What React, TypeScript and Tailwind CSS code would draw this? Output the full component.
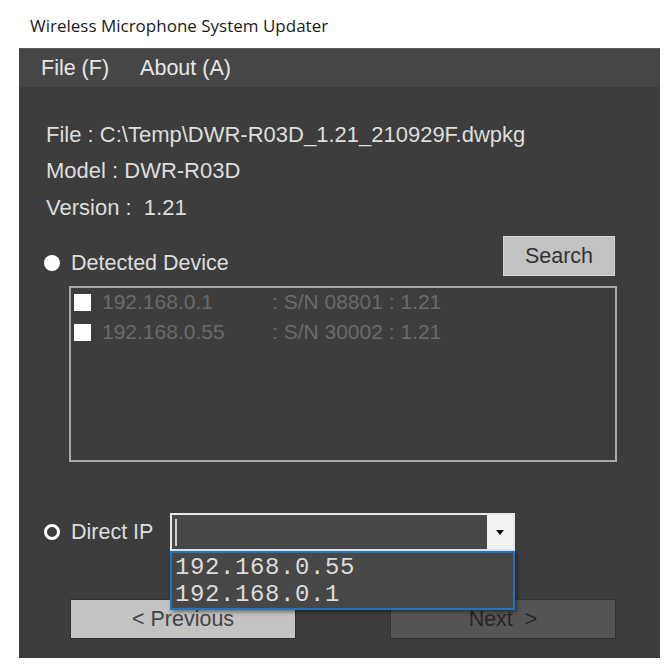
import React from 'react';

const devices = [
  { ip: '192.168.0.1', info: ': S/N 08801 : 1.21' },
  { ip: '192.168.0.55', info: ': S/N 30002 : 1.21' },
];

const history = ['192.168.0.55', '192.168.0.1'];

const sans = { fontFamily: '"Liberation Sans", Arial, sans-serif' };

const App = () => {
  return (
    <div className="w-[672px] h-[664px] bg-white overflow-hidden" style={sans}>
      {/* Window title */}
      <div
        className="h-[48px] flex items-center pl-[30px] pt-[4px] text-[17px] text-[#1a1a1a]"
        style={{ fontFamily: '"Open Sans", "Noto Sans", sans-serif' }}
      >
        Wireless Microphone System Updater
      </div>

      <div className="ml-[19px] w-[641px] h-[610px] bg-[#3d3d3d] flex flex-col">
        {/* Menu bar */}
        <div className="h-[39px] bg-[#464646] flex items-center pl-[22px] gap-[31px] text-[21.5px] text-[#e6e6e6] border-t border-[#5a5a5a]">
          <span>File (F)</span>
          <span>About (A)</span>
        </div>

        <div className="relative flex-1 pl-[27px] pt-[29px] text-[21.5px] text-[#dedede]">
          <div className="h-[36px] flex items-center text-[22px]">File : C:\Temp\DWR-R03D_1.21_210929F.dwpkg</div>
          <div className="h-[37px] flex items-center text-[22px]">Model : DWR-R03D</div>
          <div className="h-[36px] flex items-center text-[22px]">Version :&nbsp; 1.21</div>

          {/* Detected device row */}
          <div className="mt-[11px] h-[40px] flex items-start">
            <div className="mt-[17px] h-[20px] flex items-center gap-[11px] -ml-[2px]">
              <span className="w-[16px] h-[16px] rounded-full bg-white" />
              <span>Detected Device</span>
            </div>
            <button className="ml-auto mr-[45px] w-[112px] h-[40px] bg-[#c3c3c3] text-[#333] text-[21.5px] border border-[#d6d6d6]">
              Search
            </button>
          </div>

          {/* Device list */}
          <div className="mt-[10px] ml-[23px] w-[548px] h-[176px] border-2 border-[#a9a9a9] pl-[3px]">
            <div className="-mt-[1px]">
              {devices.map((d) => (
                <div key={d.ip} className="h-[30px] flex items-center text-[21px] text-[#6a6a6a]">
                  <span className="w-[17px] h-[17px] bg-white shrink-0" />
                  <span className="ml-[11px] w-[170px]">{d.ip}</span>
                  <span>{d.info}</span>
                </div>
              ))}
            </div>
          </div>

          {/* Direct IP row */}
          <div className="mt-[51px] h-[38px] flex items-center">
            <div className="flex items-center gap-[11px] -ml-[2px] w-[126px]">
              <span className="w-[16px] h-[16px] rounded-full border-[3px] border-white" />
              <span>Direct IP</span>
            </div>
            <div className="relative w-[345px] h-[38px] border-2 border-[#e8e8e8] flex">
              <div className="flex-1 bg-[#474747] flex items-center pl-[3px]">
                <span className="w-[2px] h-[27px] bg-[#cfcfcf]" />
              </div>
              <div className="w-[26px] bg-[#f2f2f2] flex items-center justify-center">
                <svg width="8" height="5" viewBox="0 0 8 5">
                  <path d="M0 0 L8 0 L4 5 Z" fill="#111" />
                </svg>
              </div>

              {/* Open dropdown */}
              <div
                className="absolute left-[-2px] top-[36px] w-[345px] h-[59px] bg-[#474747] border-2 border-[#1f74c4] shadow-[2px_2px_4px_rgba(0,0,0,0.45)] pl-[3px] pt-[1px] z-10 text-[#dcdcdc] text-[24px]"
                style={{ fontFamily: '"Liberation Mono", "Courier New", monospace' }}
              >
                {history.map((h) => (
                  <div key={h} className="h-[27px] leading-[27px] tracking-[0.6px]">
                    {h}
                  </div>
                ))}
              </div>
            </div>
          </div>

          {/* Navigation buttons */}
          <div className="mt-[48px] ml-[24px] flex gap-[94px]">
            <button className="w-[226px] h-[40px] bg-[#c3c3c3] text-[#444] text-[21.5px] border border-[#2f2f2f]">
              &lt; Previous
            </button>
            <button className="w-[226px] h-[40px] bg-[#555555] text-[#262626] text-[21.5px] border border-[#333]">
              Next&nbsp; &gt;
            </button>
          </div>
        </div>
      </div>
    </div>
  );
};

export default App;
